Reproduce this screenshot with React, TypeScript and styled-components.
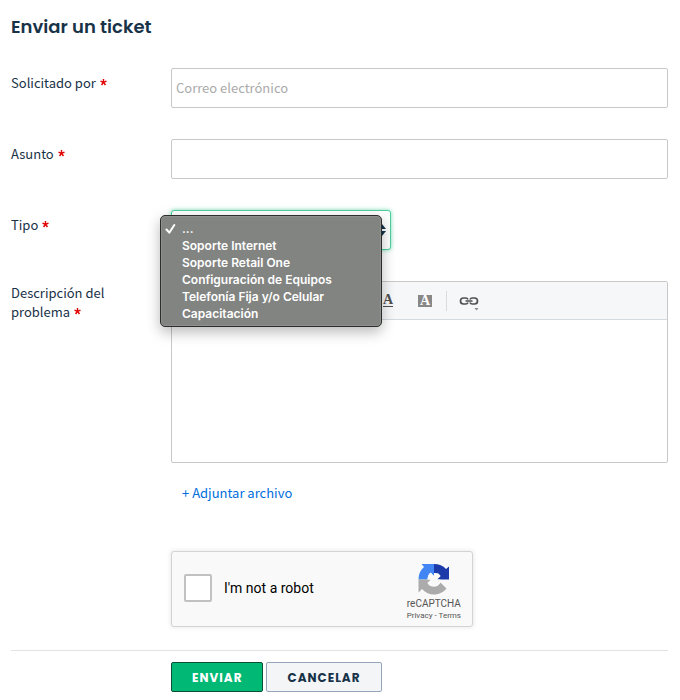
import React, { useState } from "react";
import styled, { createGlobalStyle, css } from "styled-components";

const GlobalStyle = createGlobalStyle`
  *, *::before, *::after { box-sizing: border-box; }
  body {
    margin: 0;
    background: #fff;
    color: #183247;
    font-family: "Source Sans Pro", "Noto Sans CJK SC", sans-serif;
    font-size: 13px;
    line-height: 19px;
  }
  button, input, select, textarea { font: inherit; color: inherit; }
`;

const Page = styled.main`
  padding: 13px 12px 8px 11px;
`;

const Title = styled.h1`
  margin: 0 0 27px;
  font-family: Poppins, Inter, sans-serif;
  font-size: 18px;
  font-weight: 600;
  line-height: 28px;
`;

const Row = styled.div`
  display: grid;
  grid-template-columns: 160px minmax(0, 1fr);
  margin-bottom: 31px;
`;

const Label = styled.label<{ $multiline?: boolean }>`
  padding-top: ${(p) => (p.$multiline ? 2 : 5)}px;
  padding-right: ${(p) => (p.$multiline ? 56 : 0)}px;
`;

const Star = styled.svg`
  width: 7px;
  height: 7px;
  margin-left: 1px;
  vertical-align: 2px;
  fill: #e00000;
`;

const TextInput = styled.input`
  width: 100%;
  height: 40px;
  padding: 0 4px 2px;
  border: 1px solid #c8c8c8;
  border-radius: 2px;
  background: #fff;
  &::placeholder { color: #aaa; opacity: 1; }
`;

const SelectWrap = styled.div`
  position: relative;
  width: 220px;
`;

const Select = styled.select`
  display: block;
  width: 100%;
  height: 40px;
  padding: 0 10px;
  appearance: none;
  border: 1px solid #4fcf9d;
  border-radius: 3px;
  background: #fff;
  box-shadow: 0 0 4px rgba(30, 200, 135, 0.6);
  outline: none;
`;

const Arrows = styled.svg`
  position: absolute;
  top: 14px;
  right: 5px;
  width: 8px;
  height: 12px;
  fill: #12344d;
  pointer-events: none;
`;

const Menu = styled.ul`
  position: absolute;
  z-index: 2;
  top: 5px;
  left: -11px;
  width: 222px;
  margin: 0;
  padding: 4px 0;
  list-style: none;
  border: 1px solid #2c2c2c;
  border-radius: 5px;
  background: #828482;
  box-shadow: inset 0 0 0 1px #8f918f, 0 5px 14px rgba(0, 0, 0, 0.28);
  color: #fff;
  font-family: Inter, sans-serif;
  font-size: 12px;
  font-weight: 600;
  line-height: 17px;
`;

const MenuItem = styled.li`
  display: grid;
  grid-template-columns: 17px 1fr;
  align-items: center;
  height: 17px;
  padding-left: 4px;
  cursor: default;
`;

const Check = styled.svg`
  display: block;
  width: 11px;
  height: 11px;
  fill: none;
  stroke: #fff;
  stroke-width: 2;
  stroke-linecap: round;
  stroke-linejoin: round;
`;

const Editor = styled.div`
  border: 1px solid #c8c8c8;
  border-radius: 2px;
`;

const Toolbar = styled.div`
  display: flex;
  align-items: center;
  height: 38px;
  padding-left: 205px;
  border-bottom: 1px solid #d3dae2;
  background: #f6f7f9;
`;

const Tool = styled.button`
  display: flex;
  align-items: center;
  justify-content: center;
  width: 22px;
  height: 28px;
  padding: 0;
  border: 0;
  background: none;
  color: #505050;
`;

const Glyph = styled.span<{ $filled?: boolean }>`
  height: 12px;
  font-family: "Liberation Serif", serif;
  font-size: 14px;
  font-weight: 700;
  line-height: 10px;
  text-align: center;
  ${(p) =>
    p.$filled
      ? css`width: 14px; background: #888; color: #fff; line-height: 12px;`
      : css`width: 10px; border-bottom: 1px solid #505050;`}
`;

const Spacer = styled.span`
  width: 15px;
`;

const Divider = styled.span`
  width: 1px;
  height: 20px;
  margin: 0 11px 0 10px;
  background: #d8dce0;
`;

const LinkIcon = styled.svg`
  width: 20px;
  height: 20px;
`;

const Body = styled.textarea`
  display: block;
  width: 100%;
  height: 142px;
  padding: 10px;
  border: 0;
  resize: none;
  outline: none;
  background: transparent;
`;

const Attach = styled.a`
  display: inline-block;
  margin: 20px 0 0 11px;
  color: #006fdd;
  text-decoration: none;
`;

const Captcha = styled.div`
  display: flex;
  align-items: center;
  width: 302px;
  height: 76px;
  margin-top: 49px;
  padding: 0 11px 2px 12px;
  border: 1px solid #d3d3d3;
  border-radius: 3px;
  background: #f9f9f9;
  box-shadow: 0 0 4px 1px rgba(0, 0, 0, 0.08);
  color: #000;
  font-family: Roboto, sans-serif;
`;

const Tick = styled.input`
  appearance: none;
  width: 28px;
  height: 28px;
  margin: 0 12px 0 0;
  border: 2px solid #c1c1c1;
  border-radius: 2px;
  background: #fff;
  &:checked { background: #4a90e2; }
`;

const RobotLabel = styled.label`
  flex: 1;
  font-size: 14px;
  line-height: 18px;
`;

const Brand = styled.div`
  display: flex;
  flex-direction: column;
  align-items: center;
  padding-top: 8px;
  color: #555;
  font-size: 10px;
  line-height: 12px;
`;

const BrandLogo = styled.svg`
  width: 32px;
  height: 32px;
  margin-bottom: 3px;
`;

const Legal = styled.span`
  font-size: 8px;
  line-height: 11px;
  a { color: inherit; text-decoration: none; }
`;

const Actions = styled.footer`
  display: flex;
  gap: 3px;
  margin-top: -8px;
  padding: 11px 0 0 160px;
  border-top: 1px solid #e3e3e3;
`;

const Button = styled.button<{ $primary?: boolean }>`
  height: 30px;
  padding: 0 20px;
  border: 1px solid ${(p) => (p.$primary ? "#0a4f37" : "#95a4b8")};
  border-radius: 2px;
  background: ${(p) => (p.$primary ? "#02b875" : "#f3f5f7")};
  color: ${(p) => (p.$primary ? "#fff" : "#183247")};
  font-family: Poppins, Inter, sans-serif;
  font-size: 12px;
  font-weight: 700;
  letter-spacing: 1px;
`;

const options = [
  "...",
  "Soporte Internet",
  "Soporte Retail One",
  "Configuración de Equipos",
  "Telefonía Fija y/o Celular",
  "Capacitación",
];

const Required = () => (
  <Star viewBox="0 0 14 14" role="img" aria-label="obligatorio">
    <path d="M5.500 0h3l-.3 4.400 4.300-1.300.9 2.900-4.200 1.200 2.900 3.900-2.500 1.800L7 9.200l-2.600 3.700-2.500-1.800 2.900-3.900L.6 6l.9-2.900 4.300 1.300z" />
  </Star>
);

export default function App() {
  const [type, setType] = useState("...");
  const [open, setOpen] = useState(true);

  return (
    <>
      <GlobalStyle />
      <Page>
        <Title>Enviar un ticket</Title>
        <form onSubmit={(e) => e.preventDefault()}>
          <Row>
            <Label htmlFor="email">Solicitado por <Required /></Label>
            <TextInput id="email" type="email" placeholder="Correo electrónico" />
          </Row>
          <Row>
            <Label htmlFor="subject">Asunto <Required /></Label>
            <TextInput id="subject" type="text" />
          </Row>
          <Row>
            <Label htmlFor="type">Tipo <Required /></Label>
            <SelectWrap>
              <Select id="type" value={type} onChange={(e) => setType(e.target.value)}>
                {options.map((o) => <option key={o}>{o}</option>)}
              </Select>
              <Arrows viewBox="0 0 8 12" aria-hidden="true">
                <path d="M4 0l4 5H0zM0 7h8l-4 5z" />
              </Arrows>
              {open && (
                <Menu role="listbox" aria-label="Tipo">
                  {options.map((o) => (
                    <MenuItem
                      key={o}
                      role="option"
                      aria-selected={o === type}
                      onClick={() => { setType(o); setOpen(false); }}
                    >
                      <span>
                        {o === type && (
                          <Check viewBox="0 0 11 11" aria-hidden="true">
                            <path d="M1.500 6.500l2.800 3.200L9.300 2" />
                          </Check>
                        )}
                      </span>
                      {o}
                    </MenuItem>
                  ))}
                </Menu>
              )}
            </SelectWrap>
          </Row>
          <Row>
            <Label htmlFor="description" $multiline>Descripción del problema <Required /></Label>
            <div>
              <Editor>
                <Toolbar>
                  <Tool type="button" aria-label="Color de texto"><Glyph>A</Glyph></Tool>
                  <Spacer />
                  <Tool type="button" aria-label="Color de fondo"><Glyph $filled>A</Glyph></Tool>
                  <Divider />
                  <Tool type="button" aria-label="Insertar enlace">
                    <LinkIcon viewBox="0 0 20 20" aria-hidden="true">
                      <path d="M9 8.500a2.500 2.500 0 0 0-2.500-1.500h-2a3 3 0 0 0 0 6h2A2.500 2.500 0 0 0 9 11.500M11 8.500A2.500 2.500 0 0 1 13.500 7h2a3 3 0 0 1 0 6h-2a2.500 2.500 0 0 1-2.500-1.500M6.500 10h7" fill="none" stroke="#505050" strokeWidth="1.700" />
                      <path d="M15.500 17h4l-2 2.500z" fill="#888" />
                    </LinkIcon>
                  </Tool>
                </Toolbar>
                <Body id="description" />
              </Editor>
              <Attach href="#adjuntar">+ Adjuntar archivo</Attach>
              <Captcha>
                <Tick type="checkbox" id="robot" />
                <RobotLabel htmlFor="robot">I'm not a robot</RobotLabel>
                <Brand>
                  <BrandLogo viewBox="0 0 64 64" aria-hidden="true">
                    <path fill="#1c3aa9" d="M32 2c10 0 18 3 24 10l6-5v26H38l7-7c-3-4-7-6-13-6z" />
                    <path fill="#4285f4" d="M32 2v24l-7-7c-4 3-6 7-6 14H1C1 22 5 14 12 8L7 2z" />
                    <path fill="#ababab" d="M1 33h25l-7 7c3 4 7 7 13 7 6 0 10-3 13-8l12 12c-6 7-14 12-25 12-10 0-18-4-24-11l-7 7z" />
                    <path fill="#f9f9f9" d="M26 20l6 6v-6l9 1 4 5-7 7h7l-1 7-5 6-7 1-8-1-5-6 7-7h-7l2-8 5 3z" />
                  </BrandLogo>
                  <span>reCAPTCHA</span>
                  <Legal><a href="#privacy">Privacy</a> - <a href="#terms">Terms</a></Legal>
                </Brand>
              </Captcha>
            </div>
          </Row>
          <Actions>
            <Button type="submit" $primary>ENVIAR</Button>
            <Button type="button">CANCELAR</Button>
          </Actions>
        </form>
      </Page>
    </>
  );
}
